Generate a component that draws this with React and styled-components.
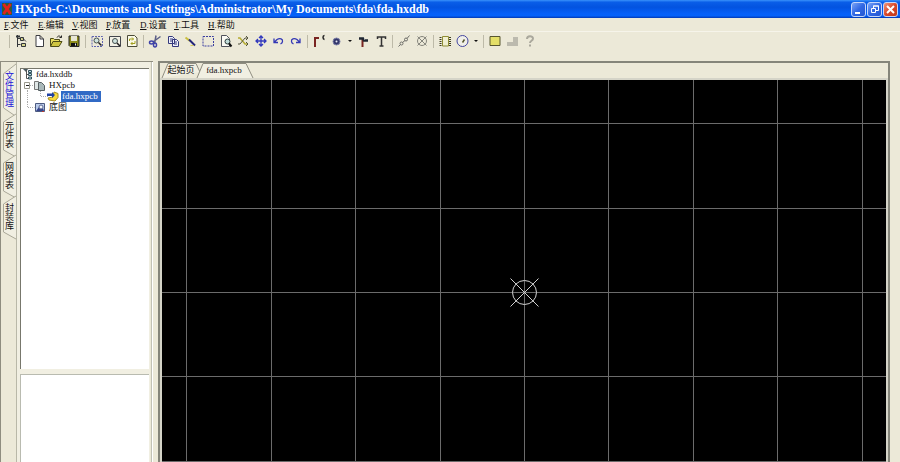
import { Fragment, useState } from "react";
import styled, { createGlobalStyle } from "styled-components";

const GlobalStyle = createGlobalStyle`
  * {
    box-sizing: border-box;
  }

  body {
    margin: 0;
    overflow: hidden;
    background: #ece9d8;
    color: #111;
    font-family: "Liberation Serif", "Noto Sans CJK SC", serif;
    font-size: 9px;
  }

  button {
    border: none;
    background: none;
    padding: 0;
    margin: 0;
    color: inherit;
    font: inherit;
  }
`;

const Window = styled.div`
  height: 100vh;
  display: flex;
  flex-direction: column;
`;

const TitleBar = styled.header`
  display: flex;
  align-items: center;
  gap: 3px;
  height: 18px;
  flex-shrink: 0;
  padding: 0 2px;
  background: linear-gradient(
    #3a92fb 0%,
    #0a5ee8 12%,
    #0353e0 40%,
    #0660f8 75%,
    #0562fa 88%,
    #0238b4 100%
  );
`;

const Title = styled.h1`
  flex: 1;
  margin: 0;
  color: #fff;
  font-size: 12px;
  font-weight: 700;
  line-height: 16px;
  white-space: nowrap;
`;

const WindowButtons = styled.div`
  display: flex;
  gap: 1px;
`;

const WindowButton = styled.button`
  width: 15px;
  height: 15px;
  border: 1px solid #c4d6fa;
  border-radius: 3px;
  background: ${(p) =>
    p.$close
      ? "linear-gradient(135deg, #f0987c, #d8482a 50%, #c03a1c)"
      : "linear-gradient(135deg, #7ba4f6, #3168e4 50%, #2456d0)"};

  svg {
    display: block;
  }
`;

const MenuBar = styled.nav`
  display: flex;
  height: 14px;
  flex-shrink: 0;
  padding-left: 4px;
  border-bottom: 1px solid #f6f4ea;
`;

const MenuItem = styled.button`
  width: 34px;
  text-align: left;
  line-height: 15px;
  white-space: nowrap;
`;

const Toolbar = styled.div`
  display: flex;
  align-items: center;
  height: 18px;
  flex-shrink: 0;
  margin-bottom: 11px;
  padding-left: 6px;
`;

const Separator = styled.span`
  width: 1px;
  height: 13px;
  flex-shrink: 0;
  margin: 0 3px;
  background: #bdbaa8;
`;

const ToolGroup = styled.div`
  display: flex;
  justify-content: space-between;
  width: ${(p) => p.$width}px;
`;

const ToolButton = styled.button`
  width: ${(p) => (p.$narrow ? 8 : 16)}px;
  height: 16px;

  svg {
    display: block;
  }
`;

const Workspace = styled.div`
  flex: 1;
  min-height: 0;
  display: flex;
  gap: 5px;
  padding-right: 10px;
`;

const SidePanel = styled.aside`
  display: flex;
  width: 153px;
  flex-shrink: 0;
  border: solid #8f8d80;
  border-width: 1px 0 0 1px;
  box-shadow: inset -1px 0 #fff, inset -2px 0 #c2c2b6;
`;

const SideTabs = styled.div`
  display: flex;
  flex-direction: column;
  width: 15px;
  padding: 2px 0 0 2px;
`;

const SideTab = styled.button`
  position: relative;
  height: ${(p) => (p.$tall ? 50 : 41)}px;
  display: flex;
  align-items: center;
  justify-content: center;
  color: ${(p) => (p.$active ? "#1a14d8" : "#111")};
  font-family: "Noto Sans CJK SC", sans-serif;
  line-height: 11px;

  span {
    position: relative;
    writing-mode: vertical-rl;
  }
`;

const TabShape = styled.svg`
  position: absolute;
  inset: 0;
  width: 100%;
  height: 100%;
  overflow: visible;
`;

const SidePages = styled.div`
  flex: 1;
  display: flex;
  flex-direction: column;
  gap: 5px;
  margin-right: 3px;
  padding: 6px 1px 0 3px;
  border-left: 1px solid #b9b8a8;
  background: #f1efe2;
`;

const TreePane = styled.ul`
  height: 301px;
  flex-shrink: 0;
  list-style: none;
  margin: 0;
  padding: 0 0 0 2px;
  background: #fff;
  border: solid #77776c;
  border-width: 1px 0 0 1px;
`;

const PreviewPane = styled.div`
  flex: 1;
  background: #fff;
  border: solid #b9bbb0;
  border-width: 1px 0 0 1px;
`;

const TreeRow = styled.li`
  display: flex;
  align-items: center;
  height: 11px;
  line-height: 11px;
  white-space: nowrap;

  svg {
    flex-shrink: 0;
  }
`;

const TreeLabel = styled.button`
  height: 11px;
  line-height: 11px;
  padding: 0 3px 0 1px;
  margin-left: 1px;
  color: ${(p) => (p.$selected ? "#fff" : "#111")};
  background: ${(p) => (p.$selected ? "#316ac5" : "transparent")};
`;

const Editor = styled.main`
  flex: 1;
  min-width: 0;
  display: flex;
  flex-direction: column;
  border: solid #85857a;
  border-width: 2px 2px 0 2px;
`;

const EditorTabs = styled.div`
  display: flex;
  height: 15px;
  flex-shrink: 0;
  padding-left: 2px;
`;

const EditorTab = styled.button`
  position: relative;
  width: ${(p) => (p.$wide ? 56 : 38)}px;
  padding-right: ${(p) => (p.$wide ? 2 : 0)}px;
  margin-right: -3px;
  line-height: 15px;
  white-space: nowrap;

  span {
    position: relative;
  }
`;

const Board = styled.div`
  flex: 1;
  min-height: 0;
  overflow: hidden;
  background: #000;
  border: solid #d5d4c8;
  border-width: 2px 2px 0 2px;

  svg {
    display: block;
    width: 100%;
    height: 100%;
  }
`;

const toolIcons = {
  tree: (
    <g fill="none" stroke="#33363a">
      <path d="M4.500 2v12M4.500 5.500h3M4.500 11.500h3" />
      <path d="M3 3.500h4" strokeWidth="2" />
      <path d="M7.500 4.500h3v3h-3zM8.500 10.500h4v3h-4z" fill="#d6d58e" />
      <path d="M10 5.500l3 3" />
    </g>
  ),
  file: <path d="M5 2.500h4l3.500 3.500v7.500H5zM9 2.500V6h3.500" fill="#fff" stroke="#3c3d42" />,
  open: (
    <g stroke="#4d4c16">
      <path d="M2.500 13V5.500h3l1 1h5V8" fill="#e8dd60" />
      <path d="M2.500 13.500L5 8.500h9l-3 5z" fill="#cfc540" />
      <path d="M9 4.500c1-2 3-2 4 0M13.500 2.500v2h-2" fill="none" stroke="#222" />
    </g>
  ),
  save: (
    <g>
      <path d="M3 3h10v10.500H4L3 12.500z" fill="#8c8b1b" stroke="#222" />
      <path d="M5 3h6v5H5z" fill="#e7e6d5" />
      <path d="M5 10h6v3H5z" fill="#111" />
      <path d="M9 10.500h1v2H9z" fill="#eee" />
    </g>
  ),
  zoomArea: (
    <g fill="none">
      <path d="M3 3.500h10.500v10H3z" stroke="#5f63b0" strokeDasharray="2 1" />
      <circle cx="7.500" cy="7.500" r="2.500" fill="#cfe3de" stroke="#46504e" />
      <path d="M9.500 9.500l3 3" stroke="#222" strokeWidth="1.500" />
    </g>
  ),
  zoomPage: (
    <g>
      <path d="M2.500 3.500h11v10h-11z" fill="#f2f1e6" stroke="#44464d" />
      <circle cx="8" cy="8" r="2.500" fill="#cfe3de" stroke="#46504e" />
      <path d="M10 10l3 3" stroke="#222" strokeWidth="1.500" />
    </g>
  ),
  refresh: (
    <g>
      <path d="M3.500 2.500h7l2.500 2.500v8.500H3.500z" fill="#fbfae8" stroke="#4b4b38" />
      <path
        d="M5.500 8V6h4M8 4.500L9.500 6 8 7.500M11 8v2.500H7M8.500 9L7 10.500 8.500 12"
        fill="none"
        stroke="#a3a01e"
      />
    </g>
  ),
  cut: (
    <g fill="none" stroke="#3e42a8">
      <path d="M13.500 3.500L6 9M9 2.500L7.500 11" strokeWidth="1.500" stroke="#5b5f86" />
      <ellipse cx="4.500" cy="9.500" rx="2" ry="1.500" strokeWidth="1.500" />
      <ellipse cx="8" cy="12" rx="1.500" ry="2" strokeWidth="1.500" />
    </g>
  ),
  copy: (
    <g fill="#eef0fa" stroke="#34387c">
      <path d="M3.500 3.500h4l2 2v5h-6zM7.500 6.500h4l2 2v5h-6z" />
      <path d="M5 6h3M5 8h2M9 9h3M9 11h3" />
    </g>
  ),
  pen: (
    <g fill="none">
      <path d="M3.500 4.500L8 8" stroke="#c9bf3f" strokeWidth="2" />
      <path d="M7 6.500l6 6" stroke="#24267a" strokeWidth="2" />
      <path d="M8.500 12.500h3" stroke="#d5cc56" />
    </g>
  ),
  select: (
    <path d="M3 3.500h10.500v9.500H3z" fill="none" stroke="#3b3fa0" strokeDasharray="2 1" />
  ),
  find: (
    <g>
      <path d="M3.500 2.500h5l3 3v8h-8z" fill="#fafaf4" stroke="#51535c" />
      <circle cx="9.500" cy="8.500" r="2.500" fill="#c1dcd8" stroke="#2f3e3e" />
      <path d="M11 10.500l2.500 3" stroke="#111" strokeWidth="2" />
    </g>
  ),
  shuffle: (
    <g fill="none">
      <path d="M3 5h2l5 6h3" stroke="#b5ac32" strokeWidth="1.500" />
      <path d="M3 11h2l5-6h3" stroke="#54553f" />
      <path d="M11 3l2 2-2 2M11 9l2 2-2 2" stroke="#54553f" />
    </g>
  ),
  move: (
    <path
      d="M8 3v10M3 8h10M6 5l2-2 2 2M6 11l2 2 2-2M5 6L3 8l2 2M11 6l2 2-2 2"
      fill="none"
      stroke="#3138bd"
      strokeWidth="1.300"
    />
  ),
  undo: (
    <path
      d="M4 5.500v4h4M4.500 9L7 6.500c3-2 6-.5 5.500 2 0 1-1 2-2 2.500"
      fill="none"
      stroke="#3438b5"
      strokeWidth="1.300"
    />
  ),
  redo: (
    <path
      d="M12 5.500v4H8M11.500 9L9 6.500c-3-2-6-.5-5.500 2 0 1 1 2 2 2.500"
      fill="none"
      stroke="#3438b5"
      strokeWidth="1.300"
    />
  ),
  track: (
    <g fill="none">
      <path d="M4 14V5h4" stroke="#792522" strokeWidth="2" />
      <path d="M13.500 2.500c-2 0-2 3.500 0 4" stroke="#222" strokeWidth="1.500" />
    </g>
  ),
  pad: (
    <g>
      <circle cx="7.500" cy="8.500" r="3.500" fill="#32366a" stroke="#7c7fa6" />
      <circle cx="7.500" cy="8.500" r="1" fill="#e9e9f4" />
    </g>
  ),
  corner: (
    <g fill="none">
      <path d="M6.500 14V6" stroke="#792522" strokeWidth="2" />
      <path d="M3 5.500h4l1 2h4" stroke="#1f2732" strokeWidth="2.500" />
      <path d="M8 6h1" stroke="#eee" />
    </g>
  ),
  text: (
    <path d="M4.500 6V4h8v2M8.500 4v9M6.500 13h4" fill="none" stroke="#333" strokeWidth="1.500" />
  ),
  link: (
    <g fill="none" stroke="#6d6d68">
      <circle cx="5.500" cy="10.500" r="1.500" />
      <circle cx="10" cy="6.500" r="1.500" />
      <path d="M2.500 13.500l2-2M6.500 9.500L9 7.500M11 5.500l2.500-3" />
    </g>
  ),
  target: (
    <g fill="none" stroke="#85857c">
      <circle cx="8" cy="8" r="4.500" />
      <path d="M3.500 3.500l9 9M12.500 3.500l-9 9" />
    </g>
  ),
  chip: (
    <g fill="none">
      <path d="M5.500 3.500h6v9.500h-6z" fill="#f0efd0" stroke="#8f8d34" />
      <path d="M3.500 4v10M13 4v10" stroke="#3f3f22" strokeWidth="2" strokeDasharray="1 1" />
    </g>
  ),
  clock: (
    <g fill="none">
      <circle cx="7.500" cy="8" r="5.500" fill="#f0efe8" stroke="#4446a0" />
      <path d="M7.500 9.500l2-3" stroke="#55552a" strokeWidth="1.500" />
    </g>
  ),
  rect: <path d="M3 3.500h10v9H3z" fill="#e4df68" stroke="#57562f" />,
  step: <path d="M2 13V9h6V4h5v9z" fill="#bcbaae" />,
  help: (
    <path
      d="M5 6c0-3.500 6-3.500 6-.5C11 8 8 7.500 8 10M8 11.500v2"
      fill="none"
      stroke="#aaa89c"
      strokeWidth="2"
    />
  ),
  arrow: <path d="M2 7h4L4 9z" fill="#111" />,
};

// width is the span of the whole group, the buttons are spread over it
const toolGroups = [
  { width: 69, tools: ["tree", "file", "open", "save"] },
  { width: 51, tools: ["zoomArea", "zoomPage", "refresh"] },
  {
    width: 157,
    tools: ["cut", "copy", "pen", "select", "find", "shuffle", "move", "undo", "redo"],
  },
  { width: 78, tools: ["track", "pad", "arrow", "corner", "text"] },
  { width: 34, tools: ["link", "target"] },
  { width: 43, tools: ["chip", "clock", "arrow"] },
  { width: 51, tools: ["rect", "step", "help"] },
];

const menus = [
  ["F", "文件"],
  ["E", "编辑"],
  ["V", "视图"],
  ["P", "放置"],
  ["D", "设置"],
  ["T", "工具"],
  ["H", "帮助"],
];

const sideTabs = ["文件管理", "元件表", "网络表", "封装库"];

const GRID = 84.4;
const ORIGIN = { x: 363, y: 212 };

function LogoIcon() {
  return (
    <svg width="10" height="12" viewBox="0 0 10 12">
      <path d="M0 0h10v12H0z" fill="#315b36" />
      <path d="M1.500 1l7 10M8.500 1l-7 10" stroke="#e3221c" strokeWidth="3" />
    </svg>
  );
}

function ToolIcon({ name }) {
  const width = name === "arrow" ? 8 : 16;
  return (
    <svg width={width} height="16" viewBox={`0 0 ${width} 16`}>
      {toolIcons[name]}
    </svg>
  );
}

function GridBoard() {
  const columns = [-4, -3, -2, -1, 0, 1, 2, 3, 4, 5, 6, 7, 8, 9, 10];
  const rows = [-2, -1, 0, 1, 2, 3, 4, 5, 6];

  return (
    <Board>
      <svg>
        <g stroke="#6b6b6b">
          {columns.map((n) => {
            const x = Math.round(ORIGIN.x + n * GRID) - 0.5;
            return <line key={n} x1={x} x2={x} y1="0" y2="100%" />;
          })}
          {rows.map((n) => {
            const y = Math.round(ORIGIN.y + n * GRID) + 0.5;
            return <line key={n} x1="0" x2="100%" y1={y} y2={y} />;
          })}
        </g>
        <g fill="none" stroke="#d0d0d0">
          <circle cx="362.500" cy="212.500" r="12" />
          <path d="M348.500 198.500l28 28M376.500 198.500l-28 28" />
        </g>
      </svg>
    </Board>
  );
}

function FileTree({ selected, onSelect }) {
  const label = (name) => (
    <TreeLabel $selected={selected === name} onClick={() => onSelect(name)}>
      {name}
    </TreeLabel>
  );

  return (
    <TreePane>
      <TreeRow>
        <svg width="11" height="11">
          <path d="M0 0h5L3 3z" fill="#4a5a60" />
          <path d="M3.500 1v8.500h2M3.500 5.500h2" fill="none" stroke="#555" />
          <path
            d="M5.500 1.500h3v2h-3zM5.500 4.500h3v2h-3zM5.500 8h3v2h-3z"
            fill="#b6dce6"
            stroke="#33505c"
          />
        </svg>
        {label("fda.hxddb")}
      </TreeRow>
      <TreeRow>
        <svg width="24" height="11">
          <path d="M4.500 8v3M7 5.500h4" stroke="#aaa" strokeDasharray="1 1" />
          <path d="M1.500 2.500h5v6h-5z" fill="#fff" stroke="#9a9a8e" />
          <path d="M3 5.500h3" stroke="#222" />
          <path d="M11.500 1.500h4l2 2v6h-6z" fill="#dfe6e6" stroke="#777" />
          <path d="M15.500 2.500h3l3 3v5h-6z" fill="#a9b8ba" stroke="#555f62" />
        </svg>
        {label("HXpcb")}
      </TreeRow>
      <TreeRow>
        <svg width="37" height="11">
          <path
            d="M4.500 0v11M17.500 0v5.500h8"
            fill="none"
            stroke="#aaa"
            strokeDasharray="1 1"
          />
          <path d="M31 1l4 1.500v4L32 10l-6-1-1-2 5-1z" fill="#f5d93e" stroke="#a88e24" />
          <path d="M24 2.500h5V1l3 3-3 3V5h-5z" fill="#2142a4" />
        </svg>
        {label("fda.hxpcb")}
      </TreeRow>
      <TreeRow>
        <svg width="24" height="11">
          <path d="M4.500 0v5.500h7" fill="none" stroke="#aaa" strokeDasharray="1 1" />
          <path d="M12.500 1.500h9v8h-9z" fill="#b9cbea" stroke="#4d5b80" />
          <path d="M13 9l3-4 2 2 2-1 1 3z" fill="#35448c" />
          <circle cx="18" cy="5" r="2" fill="#f3f5fb" stroke="#5a6691" />
          <path d="M19 9h2v1h-2z" fill="#b83c30" />
        </svg>
        {label("底图")}
      </TreeRow>
    </TreePane>
  );
}

export default function App() {
  const [sideTab, setSideTab] = useState("文件管理");
  const [selected, setSelected] = useState("fda.hxpcb");

  return (
    <Window>
      <GlobalStyle />
      <TitleBar>
        <LogoIcon />
        <Title>
          HXpcb-C:\Documents and Settings\Administrator\My Documents\fda\fda.hxddb
        </Title>
        <WindowButtons>
          <WindowButton aria-label="最小化">
            <svg width="13" height="13">
              <path d="M3 9h5v2H3z" fill="#fff" />
            </svg>
          </WindowButton>
          <WindowButton aria-label="还原">
            <svg width="13" height="13" fill="none" stroke="#fff">
              <path d="M5.500 5V3h5v4.500H8M5 3h6" />
              <path d="M3.500 5.500h4v4h-4z" />
            </svg>
          </WindowButton>
          <WindowButton $close aria-label="关闭">
            <svg width="13" height="13" stroke="#fff" strokeWidth="2">
              <path d="M3 3l7 7M10 3l-7 7" />
            </svg>
          </WindowButton>
        </WindowButtons>
      </TitleBar>

      <MenuBar>
        {menus.map(([key, name]) => (
          <MenuItem key={key}>
            <u>{key}</u>.{name}
          </MenuItem>
        ))}
      </MenuBar>

      <Toolbar>
        {toolGroups.map((group, i) => (
          <Fragment key={i}>
            <Separator />
            <ToolGroup $width={group.width}>
              {group.tools.map((tool) => (
                <ToolButton key={tool} $narrow={tool === "arrow"} aria-label={tool}>
                  <ToolIcon name={tool} />
                </ToolButton>
              ))}
            </ToolGroup>
          </Fragment>
        ))}
      </Toolbar>

      <Workspace>
        <SidePanel>
          <SideTabs>
            {sideTabs.map((name) => (
              <SideTab
                key={name}
                $tall={name.length > 3}
                $active={sideTab === name}
                onClick={() => setSideTab(name)}
              >
                <TabShape viewBox="0 0 13 41" preserveAspectRatio="none">
                  <path
                    d="M13 0L.5 8v28L13 43"
                    fill="#f1efe2"
                    stroke="#aaa898"
                    vectorEffect="non-scaling-stroke"
                  />
                </TabShape>
                <span>{name}</span>
              </SideTab>
            ))}
          </SideTabs>
          <SidePages>
            <FileTree selected={selected} onSelect={setSelected} />
            <PreviewPane />
          </SidePages>
        </SidePanel>

        <Editor>
          <EditorTabs>
            <EditorTab>
              <TabShape viewBox="0 0 38 15" preserveAspectRatio="none">
                <path d="M0 15L6 .5h28L38 9" fill="#f1efe2" stroke="#8f8d80" />
              </TabShape>
              <span>起始页</span>
            </EditorTab>
            <EditorTab $wide>
              <TabShape viewBox="0 0 56 15" preserveAspectRatio="none">
                <path d="M0 15L6 .5h43L56 15" fill="#f1efe2" stroke="#8f8d80" />
              </TabShape>
              <span>fda.hxpcb</span>
            </EditorTab>
          </EditorTabs>
          <GridBoard />
        </Editor>
      </Workspace>
    </Window>
  );
}
